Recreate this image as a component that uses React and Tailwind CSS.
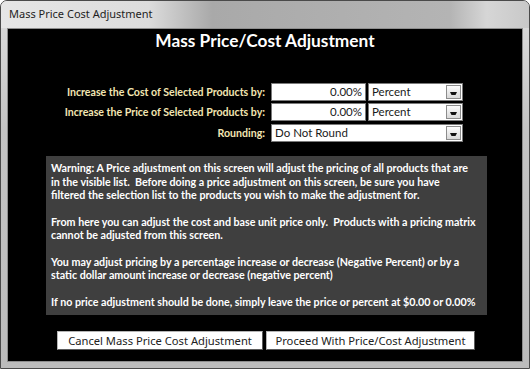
const LABEL = 'text-right text-[10.6px] font-bold text-[#f3e6b3] leading-none';
const FIELD = 'h-[18px] bg-white border border-[#7a7a7a] text-[11.5px] text-[#1a1a1a] leading-none flex items-center';

const DropButton = () => (
  <div className="ml-auto mr-[1px] w-[15px] h-[14px] bg-[linear-gradient(to_bottom,#fdfdfd,#d8d8d8)] border border-[#8c8c8c] flex items-end justify-center pb-[3px]">
    <svg width="7" height="3" viewBox="0 0 7 3">
      <path d="M0 0 H7 L5.5 3 H1.5 Z" fill="#111" />
    </svg>
  </div>
);

const Select = ({ value, width }) => (
  <div className={`${FIELD} ${width} pl-[3px]`}>
    <span>{value}</span>
    <DropButton />
  </div>
);

const PARAGRAPHS = [
  [
    'Warning: A Price adjustment on this screen will adjust the pricing of all products that are',
    'in the visible list.  Before doing a price adjustment on this screen, be sure you have',
    'filtered the selection list to the products you wish to make the adjustment for.',
  ],
  [
    'From here you can adjust the cost and base unit price only.  Products with a pricing matrix',
    'cannot be adjusted from this screen.',
  ],
  [
    'You may adjust pricing by a percentage increase or decrease (Negative Percent) or by a',
    'static dollar amount increase or decrease (negative percent)',
  ],
  ['If no price adjustment should be done, simply leave the price or percent at $0.00 or 0.00%'],
];

export default function App() {
  return (
    <div
      className="w-[530px] h-[369px] flex flex-col px-[6px] pb-[6px] border border-[#4a4a4a] rounded-t-[7px] bg-[linear-gradient(to_bottom,#dedede,#c4c4c4_35%,#bcbcbc)] overflow-hidden"
      style={{ fontFamily: '"Noto Sans", sans-serif' }}
    >
      {/* title bar */}
      <div className="h-[27px] -mx-[6px] px-[8px] flex items-center text-[11px] text-[#1e1e1e] bg-[linear-gradient(to_right,#e6e6e6_0%,#dcdcdc_28%,#a9a9a9_40%,#b4b4b4_85%,#d6d6d6_92%,#c8c8c8_100%)]">
        <span>Mass Price Cost Adjustment</span>
      </div>

      {/* client area */}
      <div className="flex-1 bg-black border border-[#8e8e8e] flex flex-col" style={{ fontFamily: 'Lato, "Noto Sans", sans-serif' }}>
        <h1 className="h-[22px] mt-[1px] text-center text-[17.3px] font-bold text-white leading-[22px]">
          Mass Price/Cost Adjustment
        </h1>

        <div className="mt-[31px] flex flex-col gap-[2px]">
          <div className="flex items-center">
            <div className={`${LABEL} w-[257px]`}>Increase the Cost of Selected Products by:</div>
            <div className={`${FIELD} w-[95px] ml-[6px] justify-end pr-[3px]`}>0.00%</div>
            <Select value="Percent" width="w-[95px] ml-[2px]" />
          </div>
          <div className="flex items-center">
            <div className={`${LABEL} w-[257px]`}>Increase the Price of Selected Products by:</div>
            <div className={`${FIELD} w-[95px] ml-[6px] justify-end pr-[3px]`}>0.00%</div>
            <Select value="Percent" width="w-[95px] ml-[2px]" />
          </div>
          <div className="flex items-center mt-[1px]">
            <div className={`${LABEL} w-[257px]`}>Rounding:</div>
            <Select value="Do Not Round" width="w-[192px] ml-[6px]" />
          </div>
        </div>

        <div className="mt-[14px] ml-[38px] w-[441px] h-[159px] bg-[#3f3f3f] px-[5px] pt-[5px] flex flex-col gap-[13px] text-[10.7px] font-bold text-white leading-[13.5px]">
          {PARAGRAPHS.map((p, i) => (
            <div key={i}>
              {p.map((line, j) => (
                <div key={j} className="whitespace-pre">{line}</div>
              ))}
            </div>
          ))}
        </div>

        <div className="mt-[16px] ml-[49px] flex gap-[3px]" style={{ fontFamily: '"Noto Sans", sans-serif' }}>
          <button className="w-[206px] h-[19px] bg-white border border-[#b5b5b5] border-r-[#5c5c5c] border-b-[#5c5c5c] text-[11.2px] text-[#222] leading-none">
            Cancel Mass Price Cost Adjustment
          </button>
          <button className="w-[209px] h-[19px] bg-white border border-[#b5b5b5] border-r-[#5c5c5c] border-b-[#5c5c5c] text-[11.2px] text-[#222] leading-none">
            Proceed With Price/Cost Adjustment
          </button>
        </div>
      </div>
    </div>
  );
}
